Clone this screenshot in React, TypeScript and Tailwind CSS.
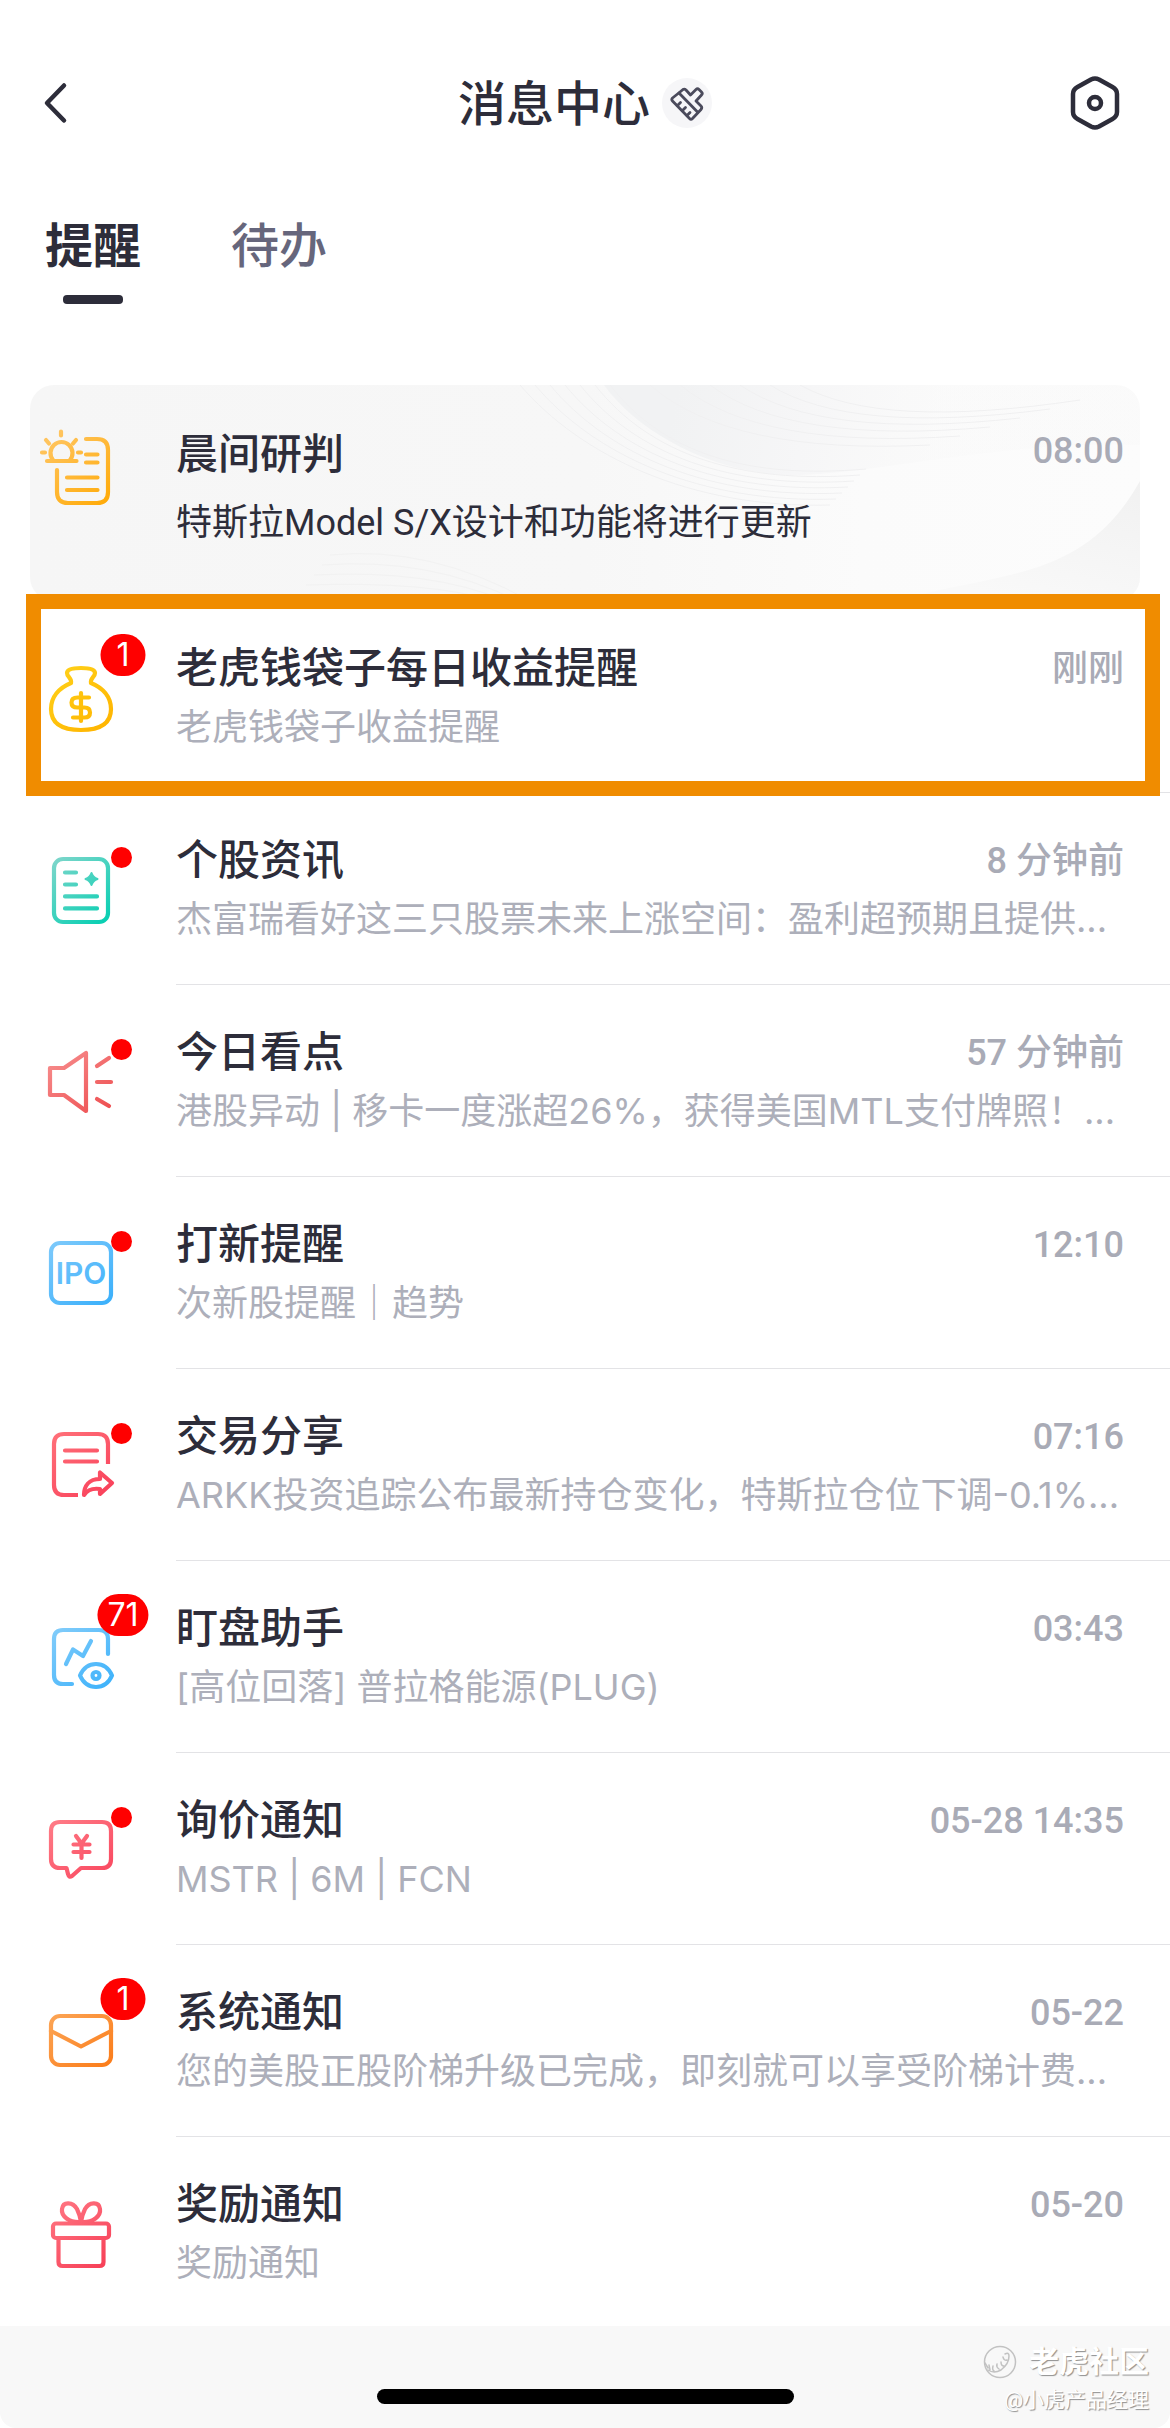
import React, { useState } from 'react';
import { clsx } from 'clsx';

interface Notice {
  id: string;
  title: string;
  summary: string;
  time: string;
  icon: React.ReactNode;
  count?: number;
  unread?: boolean;
  highlighted?: boolean;
}

interface IconFrameProps {
  id: string;
  from: string;
  to: string;
  children: React.ReactNode;
}

// Line icons share one 72px grid and a diagonal gradient stroke
function IconFrame({ id, from, to, children }: IconFrameProps) {
  return (
    <svg
      viewBox="0 0 72 72"
      className="h-[72px] w-[72px] overflow-visible"
      fill="none"
      stroke={`url(#${id})`}
      strokeWidth="4.2"
      strokeLinecap="round"
      strokeLinejoin="round"
      aria-hidden="true"
    >
      <defs>
        <linearGradient id={id} gradientUnits="userSpaceOnUse" x1="8" y1="4" x2="62" y2="68">
          <stop offset="0" stopColor={from} />
          <stop offset="1" stopColor={to} />
        </linearGradient>
      </defs>
      {children}
    </svg>
  );
}

function MorningIcon() {
  return (
    <IconFrame id="morning" from="#ffc45e" to="#ffab0a">
      <path d="M41 6h11q11 0 11 11v42q0 11-11 11H23q-11 0-11-11V37" />
      <path d="M41 21.5h11.5M41 29.5h11.5M22 44.5h30.5M22 57h30.5" />
      <path d="M2 28h29.5M8 27a11 11 0 1 1 17 0" />
      <path d="M16 -1.5v4M1 7l3 3.5M31 7l-3 3.5M-3 19.5h3M33 19.5h3" />
    </IconFrame>
  );
}

function MoneyBagIcon() {
  return (
    <IconFrame id="bag" from="#ffd21a" to="#ffb400">
      <path d="M26 21c1-5-4-6-4-10q0-5 14-5t14 5c0 4-5 5-4 10 12 5 20 14 20 26 0 14-10 21-30 21S6 61 6 47c0-12 8-21 20-26z" />
      <path d="M36 31v28M44 35.5H32.5q-6 0-6 5t6 5h7q5.5 0 5.5 5t-5.5 5H28" />
    </IconFrame>
  );
}

function NewsIcon() {
  return (
    <IconFrame id="news" from="#7fd6cb" to="#06cfb2">
      <rect x="9" y="5" width="54" height="63" rx="9" />
      <path d="M20 18.5h11M20 30.5h11M20 42.4h32M20 54.4h32" />
      <path
        d="M46.5 19q1.5 4.5 6 6-4.5 1.5-6 6-1.5-4.5-6-6 4.5-1.5 6-6z"
        fill="url(#news)"
        strokeWidth="2"
      />
    </IconFrame>
  );
}

function SpeakerIcon() {
  return (
    <IconFrame id="speaker" from="#f78f8f" to="#ee4e50">
      <path d="M5 22h14L41 7v58L19 49H5z" />
      <path d="M52 20l12-8M52 36h14M52 53l12 7" />
    </IconFrame>
  );
}

function IpoIcon() {
  return (
    <IconFrame id="ipo" from="#7cc9fb" to="#3bb0fb">
      <rect x="6" y="5" width="60" height="60" rx="9" />
      <text
        x="36"
        y="46"
        textAnchor="middle"
        fill="url(#ipo)"
        stroke="none"
        className="font-['Inter',sans-serif] text-[30px] font-semibold"
      >
        IPO
      </text>
    </IconFrame>
  );
}

function ShareIcon() {
  return (
    <IconFrame id="share" from="#ff7079" to="#f9405a">
      <path d="M63 34V14q0-10-10-10H19Q9 4 9 14v41q0 10 10 10h14" strokeLinecap="butt" />
      <path d="M20 20.5h32M20 31.5h32" />
      <path d="M55 42.5V49C44 49 39 56 39 65c4-6 9-7 16-6v5l12-11z" />
    </IconFrame>
  );
}

function WatchIcon() {
  return (
    <IconFrame id="watch" from="#84cdfa" to="#3db2fb">
      <path d="M63 32V17q0-9-9-9H18q-9 0-9 9v36q0 9 9 9h9" />
      <path d="M21 42l7-14.5L38 34l8-15" />
      <path d="M35 53.5Q40 42 51 42t16 11.5Q62 65 51 65T35 53.5z" />
      <circle cx="51" cy="53.5" r="3.5" />
    </IconFrame>
  );
}

function QuoteIcon() {
  return (
    <IconFrame id="quote" from="#ff7c87" to="#f9465e">
      <path d="M15 8h42q9 0 9 9v28q0 9-9 9H36l-9 8q-3 2-4-2l-1.5-6H15q-9 0-9-9V17q0-9 9-9z" />
      <path d="M31 22l5.5 7.5L42 22M28.5 30.5h16M28.5 38h16M36.5 30v14" />
    </IconFrame>
  );
}

function MailIcon() {
  return (
    <IconFrame id="mail" from="#fca657" to="#fb7a16">
      <rect x="6" y="10" width="60" height="49" rx="9" />
      <path d="M6 25l30 15.5L66 25" />
    </IconFrame>
  );
}

function GiftIcon() {
  return (
    <IconFrame id="gift" from="#ff7783" to="#f73f57">
      <path d="M36 24C24 25 16 18 17 11c1-8 11-7 15 0q3 6 4 13zM36 24c12 1 20-6 19-13-1-8-11-7-15 0q-3 6-4 13z" />
      <rect x="8" y="25.5" width="56" height="14.5" rx="3" />
      <path d="M13.5 41v23q0 4 4 4h37q4 0 4-4V41" />
    </IconFrame>
  );
}

const notices: Notice[] = [
  { id: 'wallet', title: '老虎钱袋子每日收益提醒', summary: '老虎钱袋子收益提醒', time: '刚刚', icon: <MoneyBagIcon />, count: 1, highlighted: true },
  { id: 'stock-news', title: '个股资讯', summary: '杰富瑞看好这三只股票未来上涨空间：盈利超预期且提供...', time: '8 分钟前', icon: <NewsIcon />, unread: true },
  { id: 'today', title: '今日看点', summary: '港股异动 | 移卡一度涨超26%，获得美国MTL支付牌照！...', time: '57 分钟前', icon: <SpeakerIcon />, unread: true },
  { id: 'ipo-alert', title: '打新提醒', summary: '次新股提醒｜趋势', time: '12:10', icon: <IpoIcon />, unread: true },
  { id: 'trade', title: '交易分享', summary: 'ARKK投资追踪公布最新持仓变化，特斯拉仓位下调-0.1%...', time: '07:16', icon: <ShareIcon />, unread: true },
  { id: 'monitor', title: '盯盘助手', summary: '[高位回落] 普拉格能源(PLUG)', time: '03:43', icon: <WatchIcon />, count: 71 },
  { id: 'inquiry', title: '询价通知', summary: 'MSTR | 6M | FCN', time: '05-28 14:35', icon: <QuoteIcon />, unread: true },
  { id: 'system', title: '系统通知', summary: '您的美股正股阶梯升级已完成，即刻就可以享受阶梯计费...', time: '05-22', icon: <MailIcon />, count: 1 },
  { id: 'reward', title: '奖励通知', summary: '奖励通知', time: '05-20', icon: <GiftIcon /> },
];

const tabs = ['提醒', '待办'];

function Header() {
  return (
    <header className="grid h-[206px] grid-cols-[1fr_auto_1fr] items-center px-10">
      <button type="button" aria-label="返回" className="justify-self-start">
        <svg viewBox="0 0 32 48" className="h-12 w-8" fill="none" stroke="#2d2d3a" strokeWidth="4.5" strokeLinecap="round" strokeLinejoin="round">
          <path d="M24 6.5L7 24l17 17.5" />
        </svg>
      </button>
      <div className="flex items-center gap-3">
        <h1 className="pt-[3px] text-[48px] leading-[64px] font-medium">消息中心</h1>
        <button type="button" aria-label="清除未读" className="rounded-full bg-[#f6f6f8]">
          <svg viewBox="12 12 50 50" className="h-[50px] w-[50px]" fill="none" stroke="#4b4b5c" strokeWidth="2.8" strokeLinecap="round" strokeLinejoin="round">
            <path d="M30 26l3-2.5q1.5-1 3 .5l4.5 5 5.5-5.5q1.5-1.5 3 0l2.5 2.5q1.5 1.5 0 3L46 35l5 5q1.5 1.5 0 3.5l-8.500 9q-1.5 1.5-3 0L22.5 35q-1.5-1.5 0-3z" />
            <path d="M29 27l18.5 19M27.5 39.5l3-3M32.5 44.5l3-3M37 49.5l3-3" />
          </svg>
        </button>
      </div>
      <button type="button" aria-label="设置" className="justify-self-end">
        <svg viewBox="0 0 70 60" className="h-[60px] w-[70px]" fill="none" stroke="#2d2d3a" strokeWidth="4.5" strokeLinejoin="round">
          <path d="M31 6.5q4-2 8 0L52.5 14q4.5 2.5 4.5 7v18q0 4.5-4.5 7L39 53.5q-4 2-8 0L17.5 46q-4.5-2.5-4.5-7V21q0-4.5 4.5-7z" />
          <circle cx="35" cy="30" r="6" />
        </svg>
      </button>
    </header>
  );
}

function CardBackdrop() {
  return (
    <svg viewBox="0 0 1110 216" preserveAspectRatio="none" className="absolute inset-0 h-full w-full" aria-hidden="true">
      <defs>
        <linearGradient id="card-base" x1="0" y1="0" x2="1" y2="0">
          <stop offset="0" stopColor="#f6f6f6" />
          <stop offset="0.5" stopColor="#f7f7f7" />
          <stop offset="0.75" stopColor="#fbfbfb" />
          <stop offset="1" stopColor="#fcfcfc" />
        </linearGradient>
        <linearGradient id="card-wave" gradientUnits="userSpaceOnUse" x1="640" y1="40" x2="900" y2="90">
          <stop offset="0" stopColor="#f1f2f3" />
          <stop offset="0.5" stopColor="#f6f6f7" />
          <stop offset="1" stopColor="#f8f8f8" stopOpacity="0.4" />
        </linearGradient>
        <linearGradient id="card-corner" x1="1" y1="0" x2="0.5" y2="1">
          <stop offset="0" stopColor="#f1f1f1" />
          <stop offset="1" stopColor="#f9f9f9" />
        </linearGradient>
      </defs>
      <rect width="1110" height="216" fill="url(#card-base)" />
      <path d="M574 0C610 50 690 92 770 90S980 55 1110 60V0z" fill="url(#card-wave)" />
      <path d="M1110 96C1080 150 1040 176 980 190S900 205 870 216h240z" fill="url(#card-corner)" />
      <g fill="none" stroke="#f0f0f1" strokeWidth="1">
        {[0, 1, 2, 3, 4, 5, 6].map((n) => (
          <path key={n} d={`M${490 + n * 15} 0C${550 + n * 14} 70 ${660 + n * 10} ${124 - n * 5} ${800 + n * 6} ${120 - n * 6}`} />
        ))}
        {[0, 1, 2, 3, 4, 5].map((n) => (
          <path key={n} d={`M${620 + n * 30} 0Q${700 + n * 30} ${70 - n * 5} ${900 + n * 30} ${60 - n * 9}`} />
        ))}
        {[0, 1, 2, 3, 4].map((n) => (
          <path key={n} d={`M${300 - n * 8} ${170 + n * 10}Q400 ${160 + n * 12} ${500 - n * 12} 216`} stroke="#f2f2f2" />
        ))}
      </g>
    </svg>
  );
}

function MorningCard() {
  return (
    <section className="relative mx-[30px] flex h-[216px] overflow-hidden rounded-[24px] pl-[15px]">
      <CardBackdrop />
      <div className="relative w-[72px] shrink-0 pt-12">
        <MorningIcon />
      </div>
      <div className="relative ml-[59px] min-w-0 flex-1 pt-[42px] pr-4">
        <div className="flex items-start justify-between">
          <h2 className="text-[42px] leading-[56px] font-medium">晨间研判</h2>
          <time className="text-[36px] leading-[48px] font-medium text-[#a9abb6]">08:00</time>
        </div>
        <p className="mt-4 truncate text-[36px] leading-[48px]">特斯拉Model S/X设计和功能将进行更新</p>
      </div>
    </section>
  );
}

function Badge({ count }: { count: number }) {
  return (
    <span className="absolute top-[33px] left-[78px] flex h-[42px] min-w-[45px] -translate-x-1/2 items-center justify-center rounded-full bg-[#ff0000] px-[10px] font-['Inter',sans-serif] text-[32px] leading-[42px] text-white">
      {count}
    </span>
  );
}

function NoticeRow({ notice }: { notice: Notice }) {
  return (
    <li className="relative">
      <a href={`#${notice.id}`} className="flex h-[192px] pl-[45px]">
        <div className="relative w-[72px] shrink-0 pt-[61px]">
          {notice.icon}
          {notice.count && <Badge count={notice.count} />}
          {notice.unread && <span className="absolute top-[54px] left-[66px] h-[21px] w-[21px] rounded-full bg-[#ff0000]" />}
        </div>
        <div className="ml-[59px] min-w-0 flex-1 border-b border-[#e3e3e6] pt-10 pr-[46px]">
          <div className="flex items-center justify-between">
            <h2 className="truncate text-[42px] leading-[56px] font-medium">{notice.title}</h2>
            <time className="shrink-0 text-[36px] leading-[48px] font-medium text-[#a9abb6]">{notice.time}</time>
          </div>
          <p className="mt-[6px] truncate font-['Inter','Noto_Sans_CJK_SC',sans-serif] text-[36px] leading-[48px] text-[#adafba]">
            {notice.summary}
          </p>
        </div>
      </a>
      {notice.highlighted && (
        <div className="pointer-events-none absolute -top-[7px] right-[10px] -bottom-[3px] left-[26px] border-[15px] border-[#f08c00]" />
      )}
    </li>
  );
}

function Watermark() {
  return (
    <div className="absolute right-[21px] bottom-[10px] flex flex-col items-end text-white [text-shadow:1px_1px_1px_#8e8e8e]">
      <div className="flex items-center gap-3">
        <svg viewBox="0 0 34 34" className="h-[34px] w-[34px]" fill="none" stroke="#c2c2c2" strokeWidth="1.5" strokeLinecap="round" aria-hidden="true">
          <circle cx="17" cy="17" r="15.5" />
          <path d="M2 18l3 5M6 20l1 5M10 21q-1 4 1 5M14 19q-1 3 2 5M18 17q0 4 3 4M20 12q1 4 4 3M22 9q4-2 4 2 0 8-8 14-7 4-13 0" />
        </svg>
        <span className="text-[30px] leading-[40px] font-bold">老虎社区</span>
      </div>
      <span className="text-[21px] leading-[36px]">@小虎产品经理</span>
    </div>
  );
}

export default function App() {
  const [activeTab, setActiveTab] = useState('提醒');

  return (
    <div className="flex min-h-screen flex-col bg-white font-['Roboto','Noto_Sans_CJK_SC',sans-serif] text-[#2d2d3a]">
      <Header />
      <nav className="flex gap-[90px] px-[45px] pt-[9px] pb-[81px]">
        {tabs.map((tab) => (
          <button key={tab} type="button" onClick={() => setActiveTab(tab)} className="flex flex-col items-center">
            <span
              className={clsx(
                'text-[48px] leading-[64px]',
                tab === activeTab ? 'font-bold' : 'font-medium text-[#66667c]'
              )}
            >
              {tab}
            </span>
            <span className={clsx('mt-4 h-[9px] w-[60px] rounded-[4px]', tab === activeTab && 'bg-[#2d2d3a]')} />
          </button>
        ))}
      </nav>
      <main>
        <MorningCard />
        <ul>
          {notices.map((notice) => (
            <NoticeRow key={notice.id} notice={notice} />
          ))}
        </ul>
      </main>
      <footer className="relative -mt-[3px] flex h-[102px] flex-col items-center rounded-b-[16px] bg-[#f8f8f8] pt-[63px]">
        <div className="h-[15px] w-[417px] rounded-full bg-black" />
        <Watermark />
      </footer>
    </div>
  );
}
